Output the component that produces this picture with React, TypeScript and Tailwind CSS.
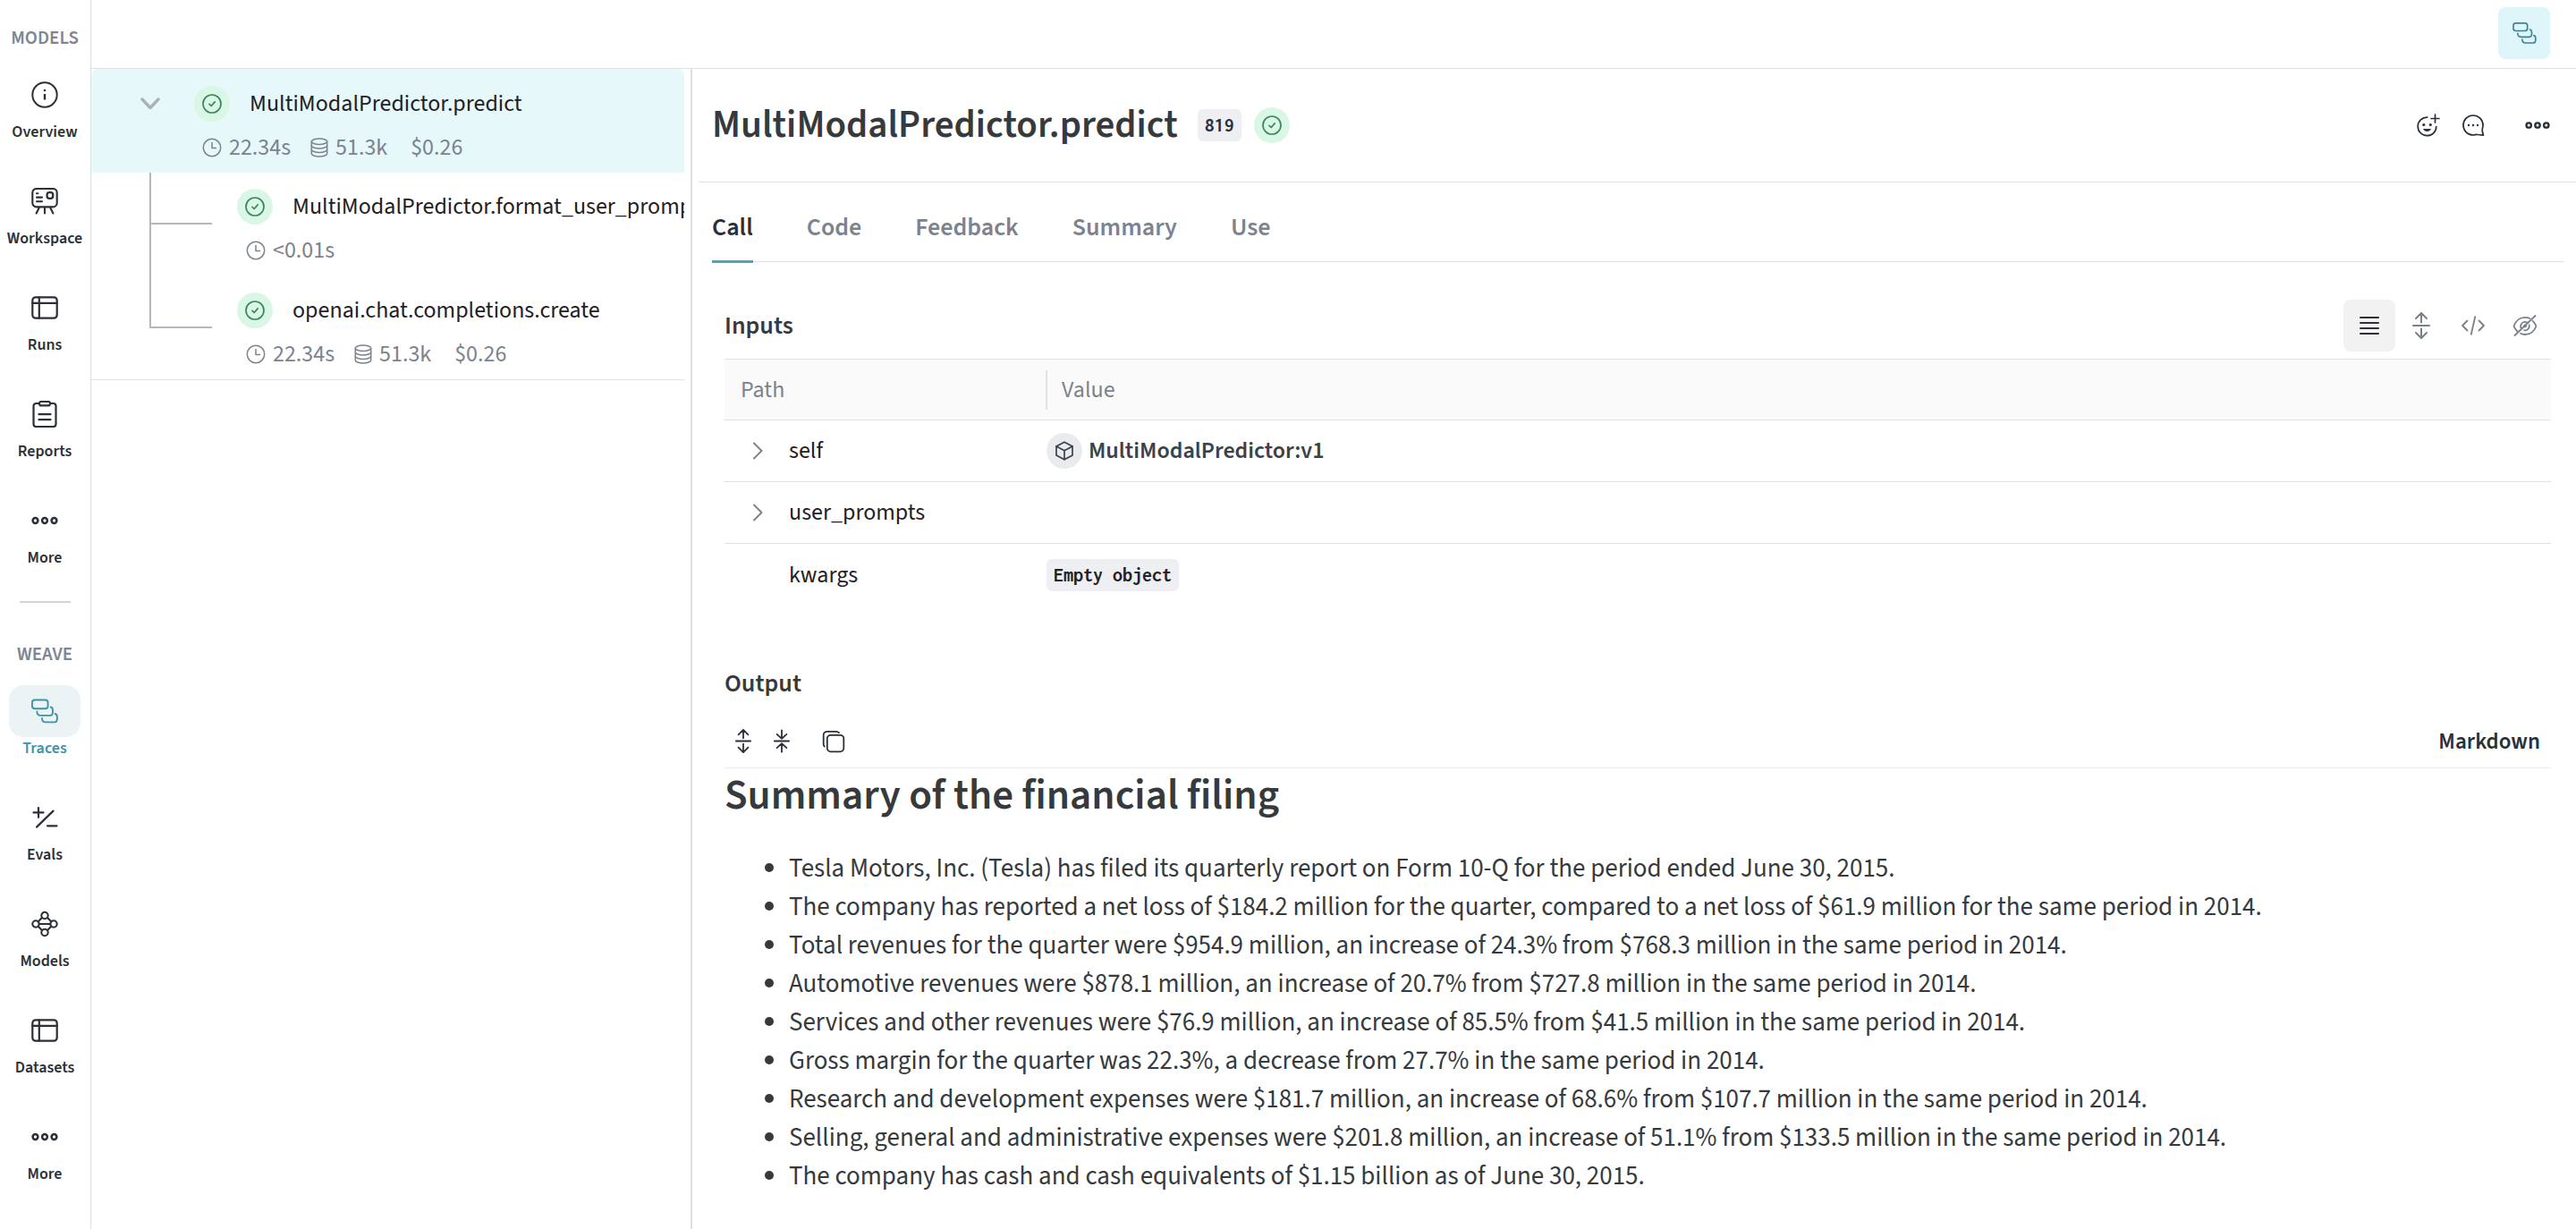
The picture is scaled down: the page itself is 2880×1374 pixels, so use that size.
import React from 'react'

type IconProps = { className?: string }

const stroke = {
  fill: 'none',
  stroke: 'currentColor',
  strokeLinecap: 'round' as const,
  strokeLinejoin: 'round' as const,
}

function InfoIcon({ className = '' }: IconProps) {
  return (
    <svg viewBox="0 0 30 30" className={className} {...stroke} strokeWidth="2">
      <circle cx="15" cy="15" r="13.7" />
      <path d="M15 14v6.5" strokeWidth="2.4" strokeLinecap="butt" />
      <circle cx="15" cy="10" r="1.3" fill="currentColor" stroke="none" />
    </svg>
  )
}

function WorkspaceIcon({ className = '' }: IconProps) {
  return (
    <svg viewBox="0 0 30 30" className={className} {...stroke} strokeWidth="2.1">
      <rect x="1.3" y="1" width="27.4" height="20.4" rx="4.5" />
      <rect x="17.6" y="5.2" width="6.6" height="6.6" rx="2.6" strokeWidth="2.3" />
      <path d="M6 6.2h1.4M6 10.6h6M6 15.2h6M8.6 22.5l-3 6M15 22.5v6M21.4 22.5l3 6" />
    </svg>
  )
}

function TableIcon({ className = '' }: IconProps) {
  return (
    <svg viewBox="0 0 30 30" className={className} {...stroke} strokeWidth="2.2">
      <rect x="1.3" y="3.3" width="27.4" height="23.4" rx="3.5" />
      <path d="M1.3 9.8h27.4M8.8 3.3v23.4" />
    </svg>
  )
}

function ReportIcon({ className = '' }: IconProps) {
  return (
    <svg viewBox="0 0 30 30" className={className} {...stroke} strokeWidth="2.2">
      <path d="M9 3H5.5A3 3 0 0 0 2.500 6v20a3 3 0 0 0 3 3h19a3 3 0 0 0 3-3V6a3 3 0 0 0-3-3H21" />
      <path d="M11 1h8a2 2 0 0 1 2 2v.6A1.800 1.800 0 0 1 19.200 5.400H10.800A1.800 1.800 0 0 1 9 3.600V3a2 2 0 0 1 2-2z" />
      <path d="M8.500 15.200h13M8.500 21.200h13" />
    </svg>
  )
}

function DotsIcon({ className = '' }: IconProps) {
  return (
    <svg viewBox="0 0 30 30" className={className} {...stroke} strokeWidth="2.5">
      <circle cx="4.500" cy="15" r="2.900" />
      <circle cx="15" cy="15" r="2.900" />
      <circle cx="25.500" cy="15" r="2.900" />
    </svg>
  )
}

function TracesIcon({ className = '' }: IconProps) {
  return (
    <svg viewBox="0 0 80 72" className={className} {...stroke} strokeWidth="5">
      <rect x="2.500" y="2.500" width="47" height="26" rx="8" />
      <path d="M17 37c0 8 4 12 11 12h26c7 0 10-3 10-10v-6c0-5-2-8-6-9" />
      <path d="M32 57c0 8 4 12 11 12h24c7 0 10-3 10-10v-6c0-5-2-8-6-9" />
    </svg>
  )
}

function EvalsIcon({ className = '' }: IconProps) {
  return (
    <svg viewBox="0 0 30 30" className={className} {...stroke} strokeWidth="2.200">
      <path d="M2.500 9.400h11M8 4v10.800M24.500 7.600L6 25.600M18 24.300h10.500" />
    </svg>
  )
}

function ModelsIcon({ className = '' }: IconProps) {
  return (
    <svg viewBox="0 0 30 30" className={className} {...stroke} strokeWidth="2.100">
      <circle cx="15" cy="5.500" r="3.700" />
      <circle cx="15" cy="24.500" r="3.700" />
      <circle cx="5" cy="15" r="3.700" />
      <circle cx="25" cy="15" r="3.700" />
      <path d="M8.700 15h12.600M7.600 12.400l4.300-4.300M22.400 12.400l-4.300-4.300M7.600 17.600l4.300 4.300M22.400 17.600l-4.300 4.300" />
    </svg>
  )
}

function CheckBadge() {
  return (
    <span className="flex size-10 shrink-0 items-center justify-center rounded-full bg-[#daf7e6] text-[#3a8560]">
      <svg viewBox="0 0 22 22" className="size-[22px]" {...stroke} strokeWidth="1.700">
        <circle cx="11" cy="11" r="10" />
        <path d="M8 11.300l2.200 2.200 4-4.600" />
      </svg>
    </span>
  )
}

function ClockIcon() {
  return (
    <svg viewBox="0 0 22 22" className="size-[22px]" {...stroke} strokeWidth="1.500">
      <circle cx="11" cy="11" r="9.700" />
      <path d="M11 5.500V11.500h4.500" />
    </svg>
  )
}

function DatabaseIcon() {
  return (
    <svg viewBox="0 0 20 22" className="h-[22px] w-5" {...stroke} strokeWidth="1.500">
      <ellipse cx="10" cy="4.200" rx="8.700" ry="3.200" />
      <path d="M1.300 4.200v13.600c0 1.800 3.900 3.200 8.700 3.200s8.700-1.400 8.700-3.200V4.200" />
      <path d="M1.300 8.700c0 1.800 3.900 3.200 8.700 3.200s8.700-1.400 8.700-3.200M1.300 13.300c0 1.800 3.900 3.200 8.700 3.200s8.700-1.400 8.700-3.200" />
    </svg>
  )
}

function SmileyPlusIcon({ className = '' }: IconProps) {
  return (
    <svg viewBox="0 0 26 26" className={className} {...stroke} strokeWidth="1.700">
      <path d="M11.800 4.100A10.300 10.300 0 1 0 21.800 14.500" />
      <path d="M20.500 1v9M16 5.500h9" />
      <circle cx="7.800" cy="12.500" r="1.600" fill="currentColor" stroke="none" />
      <circle cx="15.300" cy="12.500" r="1.600" fill="currentColor" stroke="none" />
      <path d="M7 17h9c-.8 2-2.500 3-4.500 3S7.800 19 7 17z" fill="currentColor" stroke="none" />
    </svg>
  )
}

function CommentIcon({ className = '' }: IconProps) {
  return (
    <svg viewBox="0 0 26 26" className={className} {...stroke} strokeWidth="1.700">
      <path d="M24 13A11 11 0 1 0 13 24c2 0 3.200-.8 5-.5l6.500.7c-1-2.500-1.500-4.500-1.300-6.700.5-1.500.8-3 .8-4.500z" />
      <g fill="currentColor" stroke="none">
        <circle cx="8" cy="13" r="1.200" />
        <circle cx="13" cy="13" r="1.200" />
        <circle cx="18" cy="13" r="1.200" />
      </g>
    </svg>
  )
}

function ListIcon() {
  return (
    <svg viewBox="0 0 24 24" className="size-6" {...stroke} strokeWidth="2">
      <path d="M2 3h20M2 9h20M2 15h20M2 21h20" />
    </svg>
  )
}

function ExpandIcon({ className = '' }: IconProps) {
  return (
    <svg viewBox="0 0 20 30" className={className} {...stroke} strokeWidth="2">
      <path d="M1 15h18M10 11.500V1.200M4 7l6-6 6 6M10 18.500v10.300M4 23l6 6 6-6" />
    </svg>
  )
}

function CollapseIcon({ className = '' }: IconProps) {
  return (
    <svg viewBox="0 0 20 30" className={className} {...stroke} strokeWidth="2">
      <path d="M1 15h18M10 1.500v10M4 6.500l6 5.500 6-5.500M10 28.500v-10M4 23.500l6-5.500 6 5.500" />
    </svg>
  )
}

function CodeIcon() {
  return (
    <svg viewBox="0 0 28 24" className="h-6 w-7" {...stroke} strokeWidth="1.800">
      <path d="M7.500 6.500L2 12l5.500 5.500M20.500 6.500L26 12l-5.500 5.500M16.200 2.200l-4.400 19.600" />
    </svg>
  )
}

function HiddenIcon() {
  return (
    <svg viewBox="0 0 28 24" className="h-6 w-7" {...stroke} strokeWidth="1.800">
      <path d="M5.500 18.500C3.200 16.400 2 14 1.500 12.500 3.500 6.500 8.500 2.800 14 2.800c2 0 3.600.4 5.200 1.200M22.700 6.800c1.900 1.700 3.100 3.900 3.800 5.700-2 5.800-7 9.500-12.500 9.500-1.800 0-3.500-.4-5-1.200" />
      <path d="M9.500 14.500a4.800 4.800 0 0 1 6.700-6M18.700 11.500a4.800 4.800 0 0 1-5.500 5.700M2.500 23L25.500 1" />
      <circle cx="14" cy="12.400" r="1" />
    </svg>
  )
}

function CopyIcon() {
  return (
    <svg viewBox="0 0 26 26" className="size-[26px]" {...stroke} strokeWidth="1.800">
      <rect x="5.800" y="5.800" width="18.500" height="18.500" rx="4" />
      <path d="M2.800 18.500C2 17.800 1.700 17 1.700 16V5.800a4 4 0 0 1 4-4h10c1.400 0 2.600.5 3.300 1.300" />
    </svg>
  )
}

function ChevronRight() {
  return (
    <svg viewBox="0 0 18 22" className="h-[22px] w-[18px] text-[#79808a]" {...stroke} strokeWidth="1.900">
      <path d="M5 2.500l8.500 8.500L5 19.500" />
    </svg>
  )
}

function CubeIcon() {
  return (
    <svg viewBox="0 0 22 22" className="size-[22px]" {...stroke} strokeWidth="1.700">
      <path d="M11 1.300l9 4.700v10l-9 4.700L2 16V6z" />
      <path d="M2 6l9 4.700L20 6M11 10.700v10" />
    </svg>
  )
}

type NavEntry = { label: string; Icon: (p: IconProps) => React.ReactElement; active?: boolean }

const modelsNav: NavEntry[] = [
  { label: 'Overview', Icon: InfoIcon },
  { label: 'Workspace', Icon: WorkspaceIcon },
  { label: 'Runs', Icon: TableIcon },
  { label: 'Reports', Icon: ReportIcon },
  { label: 'More', Icon: DotsIcon },
]

const weaveNav: NavEntry[] = [
  { label: 'Traces', Icon: TracesIcon, active: true },
  { label: 'Evals', Icon: EvalsIcon },
  { label: 'Models', Icon: ModelsIcon },
  { label: 'Datasets', Icon: TableIcon },
  { label: 'More', Icon: DotsIcon },
]

function NavGroup({ title, items }: { title: string; items: NavEntry[] }) {
  return (
    <section className="flex flex-col items-center gap-[23px]">
      <h2 className="text-[21px] leading-6 font-semibold text-[#808690]">{title}</h2>
      <ul className="flex flex-col items-center gap-[35px]">
        {items.map(({ label, Icon, active }) => (
          <li key={label}>
            <a
              href="#"
              className={
                active
                  ? 'flex flex-col items-center text-[#3f93a6]'
                  : 'flex flex-col items-center text-[#2b3038]'
              }
            >
              <span
                className={
                  active
                    ? 'flex h-[58px] w-20 items-center justify-center rounded-2xl bg-[#ebf3f5]'
                    : 'flex h-[58px] w-20 items-center justify-center'
                }
              >
                <Icon className="size-[30px]" />
              </span>
              <span className="text-[18px] leading-[26px] font-semibold">{label}</span>
            </a>
          </li>
        ))}
      </ul>
    </section>
  )
}

function Stats({ time, tokens, cost }: { time: string; tokens?: string; cost?: string }) {
  return (
    <div className="flex h-[30px] items-center text-[26px] leading-[30px] text-[#7d838d]">
      <ClockIcon />
      <span className="ml-2">{time}</span>
      {tokens && (
        <>
          <span className="ml-[22px]">
            <DatabaseIcon />
          </span>
          <span className="ml-2">{tokens}</span>
        </>
      )}
      {cost && <span className="ml-[26px]">{cost}</span>}
    </div>
  )
}

function TreeChild({ name, last, children }: { name: string; last?: boolean; children: React.ReactNode }) {
  return (
    <li className={last ? 'flex h-[115px]' : 'flex h-[116px]'}>
      <div className="flex w-[163px] shrink-0 flex-col pl-[65px]">
        <div className="h-[58px] w-[70px] border-b-2 border-l-2 border-[#b4b7bd]" />
        {!last && <div className="flex-1 border-l-2 border-[#b4b7bd]" />}
      </div>
      <div className="min-w-0 flex-1 overflow-hidden pt-[18px]">
        <button type="button" className="flex items-center gap-[22px] text-[26px] leading-10 whitespace-nowrap text-[#1f2124]">
          <CheckBadge />
          {name}
        </button>
        <div className="mt-[14px] pl-[10px]">{children}</div>
      </div>
    </li>
  )
}

const bullets = [
  'Tesla Motors, Inc. (Tesla) has filed its quarterly report on Form 10-Q for the period ended June 30, 2015.',
  'The company has reported a net loss of $184.2 million for the quarter, compared to a net loss of $61.9 million for the same period in 2014.',
  'Total revenues for the quarter were $954.9 million, an increase of 24.3% from $768.3 million in the same period in 2014.',
  'Automotive revenues were $878.1 million, an increase of 20.7% from $727.8 million in the same period in 2014.',
  'Services and other revenues were $76.9 million, an increase of 85.5% from $41.5 million in the same period in 2014.',
  'Gross margin for the quarter was 22.3%, a decrease from 27.7% in the same period in 2014.',
  'Research and development expenses were $181.7 million, an increase of 68.6% from $107.7 million in the same period in 2014.',
  'Selling, general and administrative expenses were $201.8 million, an increase of 51.1% from $133.5 million in the same period in 2014.',
  'The company has cash and cash equivalents of $1.15 billion as of June 30, 2015.',
]

function InputRow({ name, expandable, last, children }: { name: string; expandable?: boolean; last?: boolean; children?: React.ReactNode }) {
  const border = last ? '' : 'border-b border-[#dfe1e4]'
  return (
    <tr className="h-[69px]">
      <td className={border}>
        <div className="flex items-center gap-[26px] pl-7">
          {expandable ? (
            <button type="button" aria-label={`Expand ${name}`}>
              <ChevronRight />
            </button>
          ) : (
            <span className="w-[18px]" />
          )}
          {name}
        </div>
      </td>
      <td className={border}>{children}</td>
    </tr>
  )
}

export default function App() {
  return (
    <div className="flex min-h-screen bg-white font-['Source_Sans_3','Noto_Sans_CJK_JP',sans-serif] text-[#363a3d]">
      <nav className="flex w-[102px] shrink-0 flex-col items-center border-r border-[#dcdee0] pt-[30px] pr-px">
        <NavGroup title="MODELS" items={modelsNav} />
        <hr className="mt-[35px] mb-[45px] w-[57px] border-t-2 border-[#d2d4d6]" />
        <NavGroup title="WEAVE" items={weaveNav} />
      </nav>

      <div className="flex min-w-0 flex-1 flex-col">
        <header className="flex h-[77px] items-start justify-end border-b border-[#dfe1e4] pt-2 pr-[29px]">
          <button type="button" aria-label="Toggle trace tree" className="flex size-[58px] items-center justify-center rounded-lg bg-[#def5f9] text-[#3a8496]">
            <TracesIcon className="h-6 w-[27px]" />
          </button>
        </header>

        <div className="flex flex-1">
          <aside className="w-[672px] shrink-0 border-r-2 border-[#dadfe4] pr-[7px]">
            <ul className="border-b border-[#dfe1e4]">
              <li className="h-[116px] rounded-t-lg bg-[#e6f8f9] pt-[19px]">
                <button type="button" className="flex items-center text-[26px] leading-10 whitespace-nowrap text-[#1f2124]">
                  <svg viewBox="0 0 22 14" className="mr-[38px] ml-[55px] h-[14px] w-[22px] text-[#adb1b6]" {...stroke} strokeWidth="3.4">
                    <path d="M2 2l9 9.500L20 2" />
                  </svg>
                  <CheckBadge />
                  <span className="ml-[22px]">MultiModalPredictor.predict</span>
                </button>
                <div className="mt-[14px] pl-[124px]">
                  <Stats time="22.34s" tokens="51.3k" cost="$0.26" />
                </div>
              </li>
              <TreeChild name="MultiModalPredictor.format_user_prompts">
                <Stats time="<0.01s" />
              </TreeChild>
              <TreeChild name="openai.chat.completions.create" last>
                <Stats time="22.34s" tokens="51.3k" cost="$0.26" />
              </TreeChild>
            </ul>
          </aside>

          <main className="min-w-0 flex-1">
            <div className="ml-[7px] flex h-[127px] items-center border-b border-[#dfe1e4] pr-[29px] pl-[15px]">
              <h1 className="text-[43px] leading-[52px] font-semibold">MultiModalPredictor.predict</h1>
              <span className="ml-[22px] rounded-md bg-[#eeeff3] px-2 font-['Inconsolata','Noto_Sans_Mono_CJK_JP',monospace] text-[22px] leading-9 font-bold text-[#2b3038]">
                819
              </span>
              <span className="ml-[14px]">
                <CheckBadge />
              </span>
              <div className="ml-auto flex items-center text-[#2b3038]">
                <button type="button" aria-label="Add reaction">
                  <SmileyPlusIcon className="size-[26px]" />
                </button>
                <button type="button" aria-label="Add comment" className="ml-6">
                  <CommentIcon className="size-[26px]" />
                </button>
                <button type="button" aria-label="More actions" className="ml-[45px]">
                  <DotsIcon className="size-7" />
                </button>
              </div>
            </div>

            <div role="tablist" className="mr-[14px] ml-[22px] flex h-[89px] gap-[60px] border-b border-[#dadfe4] text-[28px] leading-9 font-semibold text-[#7d838d]">
              <button type="button" role="tab" aria-selected="true" className="-mb-[2px] border-b-[3px] border-[#4ba5b8] pt-3 text-[#2b3038]">
                Call
              </button>
              {['Code', 'Feedback', 'Summary', 'Use'].map((t) => (
                <button key={t} type="button" role="tab" aria-selected="false" className="pt-3">
                  {t}
                </button>
              ))}
            </div>

            <div className="pt-[42px] pr-7 pl-9">
              <div className="mb-2 flex items-center justify-between">
                <h2 className="text-[28px] leading-9 font-semibold">Inputs</h2>
                <div className="flex text-[#79808a]">
                  <button type="button" aria-label="List view" className="flex size-[58px] items-center justify-center rounded-lg bg-[#f2f2f2] text-[#2b3038]">
                    <ListIcon />
                  </button>
                  <button type="button" aria-label="Expand all" className="flex size-[58px] items-center justify-center">
                    <ExpandIcon className="h-[30px] w-5" />
                  </button>
                  <button type="button" aria-label="Code view" className="flex size-[58px] items-center justify-center">
                    <CodeIcon />
                  </button>
                  <button type="button" aria-label="Hide" className="flex size-[58px] items-center justify-center">
                    <HiddenIcon />
                  </button>
                </div>
              </div>

              <table className="w-full table-fixed border-separate border-spacing-0 text-[26px] leading-9 text-[#1f2124]">
                <thead>
                  <tr className="h-[69px] bg-[#fafafa] text-left text-[#7d838d]">
                    <th className="w-[359px] border-y border-[#dfe1e4] pl-[18px] font-normal">Path</th>
                    <th className="border-y border-[#dfe1e4] font-normal">
                      <div className="border-l-2 border-[#dfe1e4] py-1 pl-4">Value</div>
                    </th>
                  </tr>
                </thead>
                <tbody>
                  <InputRow name="self" expandable>
                    <a href="#" className="ml-px flex items-center gap-[7px] font-semibold text-[#3c424a]">
                      <span className="flex size-10 items-center justify-center rounded-full bg-[#e9ebef]">
                        <CubeIcon />
                      </span>
                      MultiModalPredictor:v1
                    </a>
                  </InputRow>
                  <InputRow name="user_prompts" expandable />
                  <InputRow name="kwargs" last>
                    <span className="ml-px inline-block rounded-md bg-[#eeeff3] px-2 font-['Inconsolata','Noto_Sans_Mono_CJK_JP',monospace] text-[22px] leading-9 font-bold">
                      Empty object
                    </span>
                  </InputRow>
                </tbody>
              </table>

              <h2 className="mt-[69px] text-[28px] leading-9 font-semibold">Output</h2>
              <div className="mt-[17px] flex h-[60px] items-center border-b border-[#ececec] pr-3 pl-3 text-[#2b3038]">
                <button type="button" aria-label="Expand output">
                  <ExpandIcon className="h-[27px] w-[18px]" />
                </button>
                <button type="button" aria-label="Collapse output" className="ml-[25px]">
                  <CollapseIcon className="h-[27px] w-[18px]" />
                </button>
                <button type="button" aria-label="Copy output" className="ml-9">
                  <CopyIcon />
                </button>
                <button type="button" className="ml-auto text-[25px] leading-9 font-semibold">
                  Markdown
                </button>
              </div>

              <h1 className="mt-px text-[47px] leading-[60px] font-semibold">Summary of the financial filing</h1>
              <ul className="mt-[30px] list-disc pl-[72px] text-[29px] leading-[43px]">
                {bullets.map((b) => (
                  <li key={b}>{b}</li>
                ))}
              </ul>
            </div>
          </main>
        </div>
      </div>
    </div>
  )
}
